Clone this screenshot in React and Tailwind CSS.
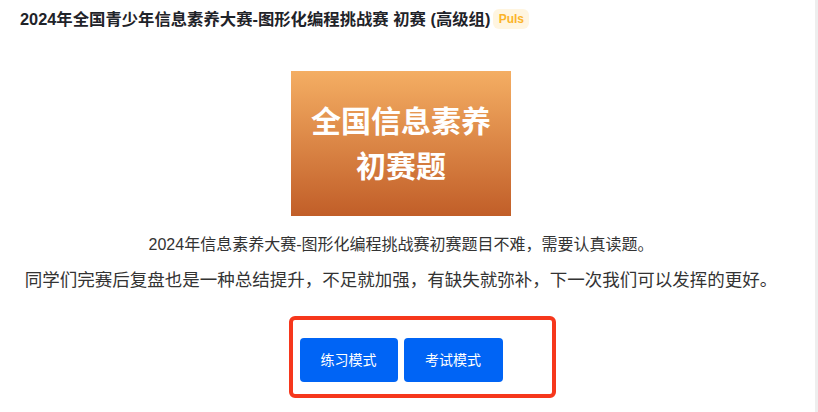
export default function App() {
  return (
    <div className="flex w-[818px] h-[412px] bg-white overflow-hidden font-['Liberation_Sans','Noto_Sans_CJK_SC',sans-serif]">
      <div className="flex-1 flex flex-col pr-[13px]">
        <div className="h-[38px] flex items-center pl-[20px] gap-[3px]">
          <h1 className="text-[16.35px] font-bold text-[#1f2329] leading-none">
            2024年全国青少年信息素养大赛-图形化编程挑战赛 初赛 (高级组)
          </h1>
          <span className="h-[20px] w-[36px] rounded-[6px] bg-[#fff5e0] text-[#fbb42a] text-[12px] font-semibold flex items-center justify-center">
            Puls
          </span>
        </div>
        <div className="mx-auto mt-[33px] w-[220px] h-[145px] bg-gradient-to-b from-[#f4ae63] to-[#c15e28] flex flex-col items-center justify-center">
          <div className="text-white font-bold text-[30px] leading-[45px]">全国信息素养</div>
          <div className="text-white font-bold text-[30px] leading-[45px]">初赛题</div>
        </div>
        <p className="mt-[17px] text-center text-[16px] leading-[24px] text-[#333333]">
          2024年信息素养大赛-图形化编程挑战赛初赛题目不难，需要认真读题。
        </p>
        <p className="mt-[10px] text-center text-[17.5px] leading-[26px] text-[#333333]">
          同学们完赛后复盘也是一种总结提升，不足就加强，有缺失就弥补，下一次我们可以发挥的更好。
        </p>
        <div className="mt-[45px] flex justify-center">
          <div className="relative flex gap-[6px]">
            <button className="w-[98px] h-[44px] rounded-[4px] bg-[#0064f5] text-white text-[14px]">练习模式</button>
            <button className="w-[99px] h-[44px] rounded-[4px] bg-[#0064f5] text-white text-[14px]">考试模式</button>
            <div className="absolute left-[-11px] top-[-22px] w-[267px] h-[82px] border-[4px] border-[#f6371c] rounded-[6px] pointer-events-none"></div>
          </div>
        </div>
      </div>
      <div className="w-[3px] bg-[#eeeeee]"></div>
    </div>
  );
}
